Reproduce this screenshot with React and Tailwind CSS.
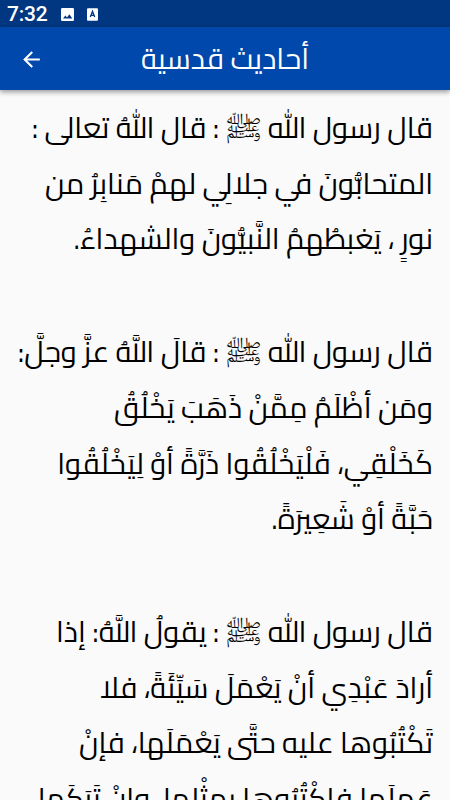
const HADITHS = [
  [
    'قال رسول الله ﷺ : قال اللهُ تعالى :',
    'المتحابُّونَ في جلالِي لهمْ مَنابِرُ من',
    'نورٍ ، يَغبطُهمُ النَّبيُّونَ والشهداءُ.',
  ],
  [
    'قال رسول الله ﷺ : قالَ اللَّهُ عزَّ وجلَّ:',
    'ومَن أظْلَمُ مِمَّنْ ذَهَبَ يَخْلُقُ',
    'كَخَلْقِي، فَلْيَخْلُقُوا ذَرَّةً أوْ لِيَخْلُقُوا',
    'حَبَّةً أوْ شَعِيرَةً.',
  ],
  [
    'قال رسول الله ﷺ : يقولُ اللَّهُ: إذا',
    'أرادَ عَبْدِي أنْ يَعْمَلَ سَيِّئَةً، فلا',
    'تَكْتُبُوها عليه حتَّى يَعْمَلَها، فإنْ',
    'عَمِلَها فاكْتُبُوها بمِثْلِها، وإنْ تَرَكَها',
  ],
];

function StatusBar() {
  return (
    <div className="flex h-[27px] items-center bg-[#003780] pl-[7px] pt-[2px] text-white">
      <span className="font-['Roboto',sans-serif] text-[21px] font-medium leading-none tracking-[-0.2px]">7:32</span>
      <svg className="-mt-px ml-[13px]" width="13" height="13" viewBox="0 0 13 13">
        <rect width="13" height="13" rx="1.3" fill="#fff" />
        <path d="M2 10.6 4.4 7.5 6 9.4 8.4 6.2 11.3 10.6Z" fill="#003780" />
      </svg>
      <svg className="-mt-px ml-[13px]" width="11" height="13" viewBox="0 0 11 13">
        <rect y=".3" width="11" height="12.4" rx="1" fill="#fff" />
        <path d="M3.3 9.1 5.5 3.4 7.7 9.1M4 7.3H7" fill="none" stroke="#003780" strokeWidth="1.3" />
      </svg>
    </div>
  );
}

function AppBar() {
  return (
    <header className="relative z-10 grid h-[63px] grid-cols-[64px_1fr_64px] items-center bg-[#0048ab] text-white shadow-[0_2px_5px_rgba(0,0,0,0.4)]">
      <button className="flex h-full items-center pl-[19px]" aria-label="رجوع">
        <svg width="25" height="25" viewBox="0 0 24 24" fill="currentColor">
          <path d="M20 11H7.83l5.59-5.59L12 4l-8 8 8 8 1.41-1.41L7.83 13H20v-2z" />
        </svg>
      </button>
      <h1 dir="rtl" className="text-center text-[29.25px] leading-[64px]">أحاديث قدسية</h1>
    </header>
  );
}

// the ligature sits higher than the text around it, so it is lowered a bit
function Line({ text }) {
  const [before, after] = text.split('ﷺ');
  if (after === undefined) return text;
  return (
    <>
      {before}<span className="align-[-4px] leading-none">ﷺ</span>{after}
    </>
  );
}

function Hadith({ lines }) {
  return (
    <p className="mb-[56.4px]">
      {lines.map(line => (
        <span key={line} className="block h-[55.4px] whitespace-nowrap leading-[55.4px] first:h-[57px] first:leading-[57px]">
          <Line text={line} />
        </span>
      ))}
    </p>
  );
}

export default function App() {
  return (
    <div className="flex h-[800px] w-[450px] flex-col overflow-hidden bg-[#fafafa] font-['Cairo','Noto_Naskh_Arabic_UI','Noto_Naskh_Arabic','Noto_Sans',sans-serif]">
      <StatusBar />
      <AppBar />
      <main dir="rtl" className="min-h-0 flex-1 overflow-hidden px-[17px] pt-[9px] text-[29.2px] text-black">
        {HADITHS.map((lines, i) => (
          <Hadith key={i} lines={lines} />
        ))}
      </main>
    </div>
  );
}
